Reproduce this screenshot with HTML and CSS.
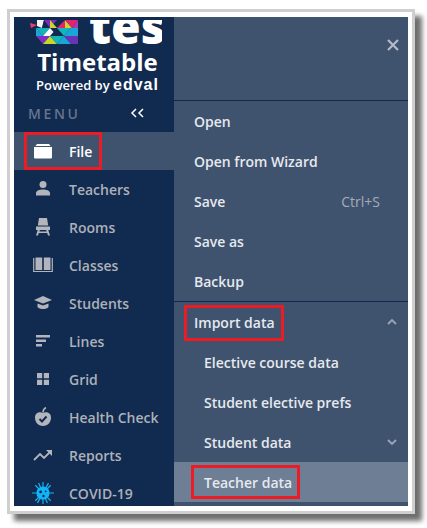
FILE: index.html
```html
<!DOCTYPE html>
<html lang="en">
<head>
<meta charset="utf-8">
<title>Timetable menu</title>
<link rel="stylesheet" href="styles.css">
</head>
<body>
<div class="frame">
  <div class="app">
    <aside class="sidebar">
      <div class="logo">
        <div class="brand">
          <svg class="mosaic" width="48" height="24" viewBox="0 0 48 24">
            <polygon points="0,3 7,5 1,8" fill="#ec3b7c"/>
            <polygon points="7,0 14,0 12,8 7,6" fill="#f4f4f4"/>
            <polygon points="14,0 20,8 12,8" fill="#12294f"/>
            <polygon points="20,0 27,0 20,8 14,0" fill="#7d2bb8"/>
            <polygon points="20,0 27,8 20,8" fill="#c8d72a"/>
            <polygon points="27,8 35,0 35,8" fill="#e5226f"/>
            <polygon points="35,0 42,8 35,8" fill="#c8d72a"/>
            <polygon points="35,0 48,0 42,8" fill="#e5226f"/>
            <polygon points="42,8 48,0 48,8" fill="#a83bb0"/>
            <polygon points="6,8 20,8 13,16" fill="#14b5b8"/>
            <polygon points="6,8 13,16 6,16" fill="#1aa6d8"/>
            <polygon points="20,8 20,16 13,16" fill="#fff"/>
            <polygon points="20,8 27,16 20,16" fill="#f4f4f4"/>
            <polygon points="27,8 34,16 20,16" fill="#12294f"/>
            <polygon points="27,8 41,8 34,16" fill="#14b5b8"/>
            <polygon points="41,8 48,8 48,16 34,16" fill="#1aa6d8"/>
            <polygon points="6,16 20,16 13,24" fill="#7c2fc0"/>
            <polygon points="20,16 27,24 13,24" fill="#c8d72a"/>
            <polygon points="20,16 34,16 27,24" fill="#14b5b8"/>
            <polygon points="34,16 41,24 27,24" fill="#1aa6d8"/>
            <polygon points="34,16 48,16 48,24 41,24" fill="#6a32b5"/>
          </svg>
          <span class="tes">tes</span>
        </div>
        <div class="timetable">Timetable</div>
        <div class="powered">Powered by <span class="edval">edval</span></div>
      </div>
      <div class="menu-head"><span class="menu-label">MENU</span><span class="collapse">
        <svg width="15" height="10" viewBox="0 0 15 10"><path d="M6 1 2 5l4 4M13 1 9 5l4 4" fill="none" stroke="#fff" stroke-width="1.5"/></svg></span></div>
      <nav class="nav">
        <div class="nav-item active">
          <span class="red-box file-box"></span>
          <svg class="icon" viewBox="0 0 20 20"><path d="M4 3h12l1.500 2H2.500zM1 6h18v10.500q0 1-1 1H2q-1 0-1-1z" fill="#fff"/></svg>
          <span>File</span>
        </div>
        <div class="nav-item">
          <svg class="icon" viewBox="0 0 20 20"><circle cx="10" cy="5.500" r="3.500" fill="#b2b5bb"/><path d="M3 16.500v-2.500c0-2.500 4-3.500 7-3.500s7 1 7 3.500v2.500z" fill="#b2b5bb"/></svg>
          <span>Teachers</span>
        </div>
        <div class="nav-item">
          <svg class="icon" viewBox="0 0 20 20"><path d="M6 1h8l1.200 7.500H4.800zM3 9.500h14V13h-1.700l1.700 5.500h-2l-.8-2.500H5.800L5 18.500H3L4.700 13H3zM6.800 13l-.4 1.500h7.200l-.4-1.500z" fill="#b2b5bb" fill-rule="evenodd"/></svg>
          <span>Rooms</span>
        </div>
        <div class="nav-item">
          <svg class="icon" viewBox="0 0 20 20"><path d="M2.500 2.500h6.700V15H2.500zM10.800 2.500h6.700V15h-6.700z" fill="#b2b5bb"/><path d="M.7 3v13.500h18.600V3" fill="none" stroke="#b2b5bb" stroke-width="1.200"/></svg>
          <span>Classes</span>
        </div>
        <div class="nav-item">
          <svg class="icon" viewBox="0 0 20 20"><path d="M10 3 19 7l-9 3.500L1 7z" fill="#b2b5bb"/><path d="M4.500 10.500 10 12.500l5.500-2V14c-1 1.500-3.500 2-5.500 2s-4.500-.5-5.500-2z" fill="#b2b5bb"/></svg>
          <span>Students</span>
        </div>
        <div class="nav-item">
          <svg class="icon" viewBox="0 0 20 20"><path d="M3 4h14v2.500H3zM3 8.500h10V11H3zM3 13h6v2.500H3z" fill="#b2b5bb"/></svg>
          <span>Lines</span>
        </div>
        <div class="nav-item">
          <svg class="icon" viewBox="0 0 20 20"><path d="M4 4h5.200v5.200H4zM10.800 4H16v5.200h-5.200zM4 10.800h5.200V16H4zM10.800 10.800H16V16h-5.200z" fill="#b2b5bb"/></svg>
          <span>Grid</span>
        </div>
        <div class="nav-item">
          <svg class="icon" viewBox="0 0 20 20"><path d="M10 6C7 4.500 2 5.500 2 10.500 2 15 5 19 10 19s8-4 8-8.500C18 5.500 13 4.500 10 6z" fill="#b2b5bb"/><path d="M10 5.500C10 3 11 1.500 13 .5" fill="none" stroke="#b2b5bb" stroke-width="1.500"/><path d="m6.500 12 2.500 2.500 4.500-5" fill="none" stroke="#12294f" stroke-width="2"/></svg>
          <span>Health Check</span>
        </div>
        <div class="nav-item">
          <svg class="icon" viewBox="0 0 20 20"><path d="m1 15 6-6 4 4 6-6" fill="none" stroke="#b2b5bb" stroke-width="1.800"/><path d="M13 5h6v6z" fill="#b2b5bb"/></svg>
          <span>Reports</span>
        </div>
        <div class="nav-item">
          <svg class="icon virus" viewBox="0 0 20 20"><path d="M10 0v20M0 10h20M3 3l14 14M17 3 3 17M6 1l8 18M15 1 5 19" stroke="#12b5f5" stroke-width="1.100"/><circle cx="10" cy="10" r="6" fill="#0fb6f7"/><circle cx="7.800" cy="9" r="1.300" fill="#12294f"/><circle cx="12.500" cy="8.500" r=".8" fill="#12294f"/><circle cx="10.500" cy="12.700" r="1.100" fill="#12294f"/></svg>
          <span>COVID-19</span>
        </div>
      </nav>
    </aside>
    <section class="panel">
      <div class="panel-head">
        <svg class="close" width="12" height="12" viewBox="0 0 12 12"><path d="M1 1l10 10M11 1 1 11" stroke="#b4bbc7" stroke-width="2.200"/></svg>
      </div>
      <div class="group">
        <div class="row"><span>Open</span></div>
        <div class="row"><span>Open from Wizard</span></div>
        <div class="row"><span>Save</span><span class="shortcut">Ctrl+S</span></div>
        <div class="row"><span>Save as</span></div>
        <div class="row"><span>Backup</span></div>
      </div>
      <div class="group group-import">
        <div class="row import">
          <span class="red-box import-box"></span>
          <span>Import data</span>
          <svg class="chev" width="10" height="6" viewBox="0 0 10 6"><path d="M1 5l4-4 4 4" fill="none" stroke="#9aa5b6" stroke-width="1.800"/></svg>
        </div>
        <div class="row sub"><span>Elective course data</span></div>
        <div class="row sub"><span>Student elective prefs</span></div>
        <div class="row sub"><span>Student data</span>
          <svg class="chev" width="10" height="6" viewBox="0 0 10 6"><path d="M1 1l4 4 4-4" fill="none" stroke="#9aa5b6" stroke-width="1.800"/></svg>
        </div>
        <div class="row sub selected">
          <span class="red-box teacher-box"></span>
          <span>Teacher data</span>
        </div>
      </div>
    </section>
  </div>
</div>
</body>
</html>
```

FILE: styles.css
```css
* { box-sizing: border-box; }
html, body { margin: 0; padding: 0; background: #fff; }
body { font-family: "Open Sans", "Noto Sans", sans-serif; height: 528px; overflow: hidden; }

.frame {
  width: 408px;
  height: 505px;
  margin: 9px 0 0 7px;
  border: 3px solid #cfcfcf;
  padding: 5px 4px 5px 4px;
  background: #fff;
  box-shadow: 7px 7px 5px #6e6e6e;
}
.app { display: flex; height: 489px; overflow: hidden; }

.sidebar { width: 160px; background: #112a50; flex: none; }
.logo { height: 83px; overflow: hidden; color: #fff; display: flex; flex-direction: column; align-items: center; padding: 3px 0 0 7px; }
.brand { display: flex; align-items: flex-start; height: 24px; gap: 11px; overflow: hidden; width: 132px; margin-left: -3px; flex: none; }
.mosaic { flex: none; }
.tes { font-weight: 800; font-size: 48px; line-height: 24px; height: 24px; margin-top: -6px; }
.timetable { font-size: 24px; font-weight: 700; line-height: 28px; margin-top: 4px; white-space: nowrap; }
.powered { font-size: 13px; font-weight: 600; line-height: 18px; white-space: nowrap; }
.edval { font-size: 16px; letter-spacing: 1px; font-family: "Liberation Sans", sans-serif; }

.menu-head { height: 32px; display: flex; align-items: center; padding: 0 29px 6px 14px; justify-content: space-between; }
.menu-label { font-size: 14px; letter-spacing: 2.6px; color: #66748b; font-weight: 600; }
.collapse { display: flex; }

.nav { display: flex; flex-direction: column; }
.nav-item { position: relative; height: 38px; display: flex; align-items: center; padding-left: 19px; gap: 16px; font-size: 14px; font-weight: 600; color: #adb1b8; }
.nav-item.active { background: #3f536f; color: #fff; }
.icon { width: 20px; height: 20px; flex: none; }
.virus { width: 22px; height: 22px; margin: 0 -1px; }

.panel { flex: 1; background: #3f536f; display: flex; flex-direction: column; color: #e6e9ee; font-size: 14px; font-weight: 600; }
.panel-head { height: 84px; border-bottom: 1px solid #12294f; display: flex; justify-content: flex-end; padding: 22px 9px 0 0; flex: none; }
.close { display: block; }
.group { display: flex; flex-direction: column; }
.group-import { border-top: 1px solid #12294f; }
.row { position: relative; height: 40px; display: flex; align-items: center; justify-content: space-between; padding: 0 11px 0 20px; flex: none; }
.row.sub { padding-left: 30px; }
.row.selected { background: #6e7e94; }
.shortcut { color: #a3acba; font-weight: 400; margin-right: 17px; }

.red-box { position: absolute; border: 3px solid #ed1c24; }
.file-box { left: 10px; top: 0; width: 78px; height: 38px; }
.import-box { left: 10px; top: 3px; width: 100px; height: 36px; }
.teacher-box { left: 17px; top: 3px; width: 109px; height: 34px; }
```
